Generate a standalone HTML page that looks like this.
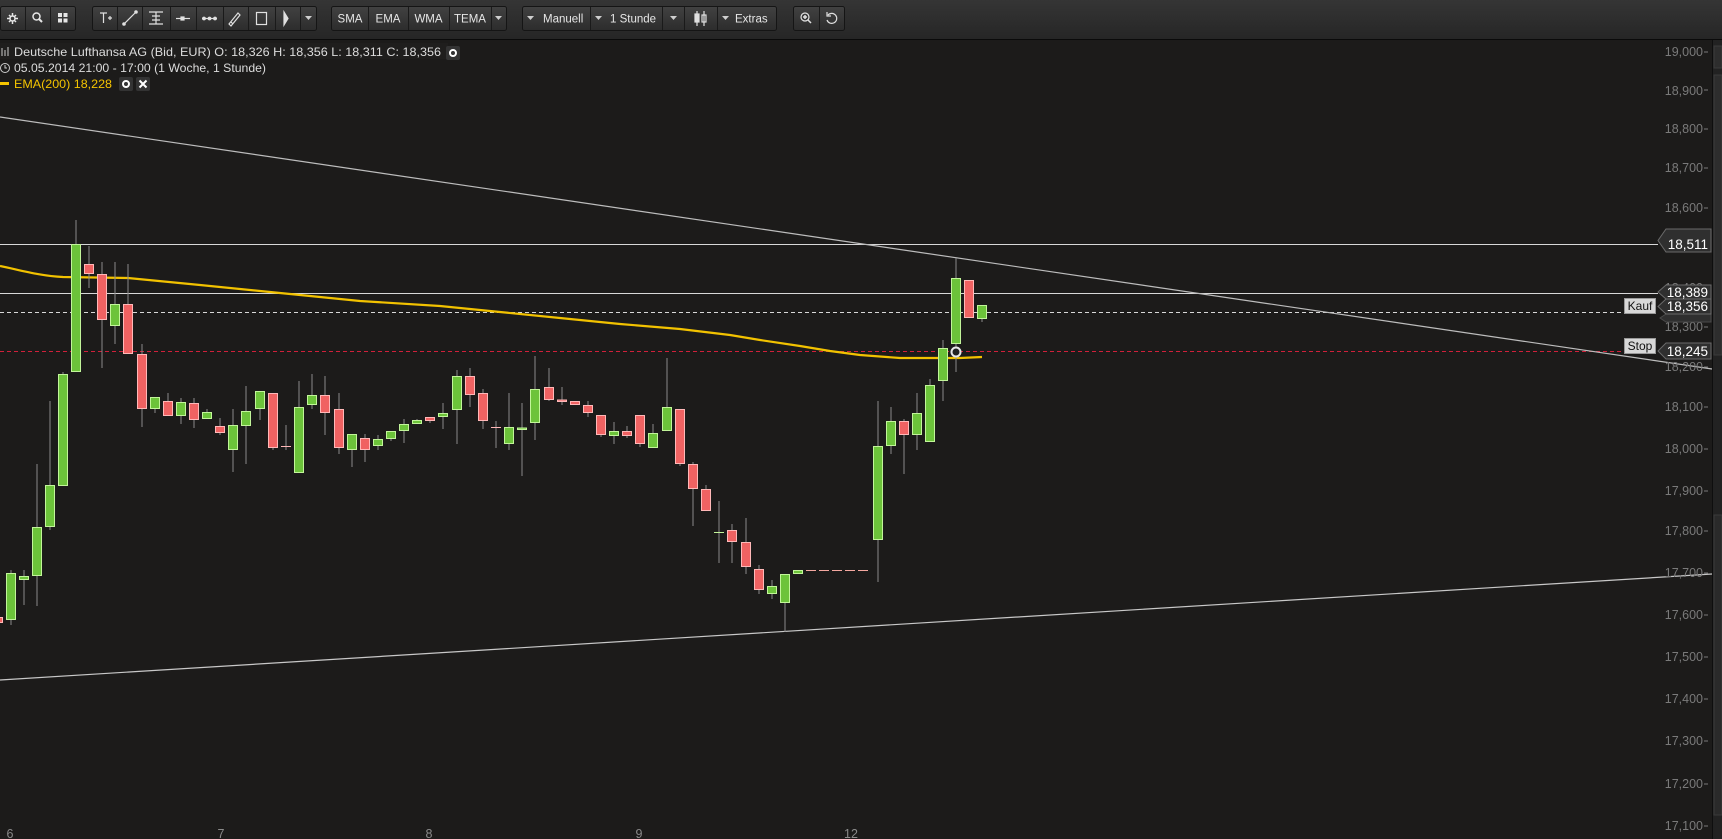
<!DOCTYPE html>
<html><head><meta charset="utf-8"><style>
html,body{margin:0;padding:0;background:#1c1b1a;width:1722px;height:839px;overflow:hidden;font-family:"Liberation Sans",Arial,sans-serif}
svg text{font-family:"Liberation Sans",Arial,sans-serif}
</style></head><body>
<svg width="1722" height="839" viewBox="0 0 1722 839" xmlns="http://www.w3.org/2000/svg">
<defs>
<linearGradient id="tb" x1="0" y1="0" x2="0" y2="1"><stop offset="0" stop-color="#353535"/><stop offset="1" stop-color="#262626"/></linearGradient>
<linearGradient id="bt" x1="0" y1="0" x2="0" y2="1"><stop offset="0" stop-color="#424242"/><stop offset="1" stop-color="#2c2c2c"/></linearGradient>
</defs>
<rect width="1722" height="839" fill="#1c1b1a"/>
<!-- toolbar -->
<rect width="1722" height="39" fill="url(#tb)"/>
<line x1="0" y1="39.5" x2="1722" y2="39.5" stroke="#0a0a0a"/>
<g stroke="#151515" fill="url(#bt)">
<rect x="0.5" y="6.5" width="75" height="24" rx="2"/>
<rect x="92.5" y="6.5" width="224" height="24" rx="2"/>
<rect x="331.5" y="6.5" width="175" height="24" rx="2"/>
<rect x="522.5" y="6.5" width="254" height="24" rx="2"/>
<rect x="793.5" y="6.5" width="51" height="24" rx="2"/>
</g>
<g stroke="#1a1a1a">
<line x1="25.5" y1="7" x2="25.5" y2="30"/><line x1="50.5" y1="7" x2="50.5" y2="30"/>
<line x1="117.5" y1="7" x2="117.5" y2="30"/><line x1="142.5" y1="7" x2="142.5" y2="30"/><line x1="170.5" y1="7" x2="170.5" y2="30"/><line x1="196.5" y1="7" x2="196.5" y2="30"/><line x1="223.5" y1="7" x2="223.5" y2="30"/><line x1="248.5" y1="7" x2="248.5" y2="30"/><line x1="275.5" y1="7" x2="275.5" y2="30"/><line x1="300.5" y1="7" x2="300.5" y2="30"/>
<line x1="368.5" y1="7" x2="368.5" y2="30"/><line x1="408.5" y1="7" x2="408.5" y2="30"/><line x1="449.5" y1="7" x2="449.5" y2="30"/><line x1="491.5" y1="7" x2="491.5" y2="30"/>
<line x1="590.5" y1="7" x2="590.5" y2="30"/><line x1="662.5" y1="7" x2="662.5" y2="30"/><line x1="684.5" y1="7" x2="684.5" y2="30"/><line x1="717.5" y1="7" x2="717.5" y2="30"/>
<line x1="819.5" y1="7" x2="819.5" y2="30"/>
</g>
<g fill="#e6e6e6" stroke="#e6e6e6" stroke-width="1.5">
<!-- gear -->
<circle cx="12.5" cy="18.5" r="2.5" fill="none"/><path d="M12.5 13v3M12.5 21v3M7 18.5h3M15 18.5h3M9 15l2 2M14 20l2 2M16 15l-2 2M9 22l2-2" fill="none"/>
<!-- search -->
<circle cx="36.5" cy="16.5" r="3.5" fill="none"/><path d="M39 19l3 3" fill="none" stroke-width="2"/>
<!-- grid -->
<rect x="58" y="13" width="4" height="4" stroke="none"/><rect x="63.5" y="13" width="4" height="4" stroke="none"/><rect x="58" y="18.5" width="4" height="4" stroke="none"/><rect x="63.5" y="18.5" width="4" height="4" stroke="none"/>
</g>
<g fill="none" stroke="#e0e0e0" stroke-width="1.2">
<path d="M100 13h7M103.5 13v10M108 18h4M110 16v4"/>
<path d="M124 24l12-12"/><circle cx="124" cy="24" r="1.2" fill="#e0e0e0"/><circle cx="136" cy="12" r="1.2" fill="#e0e0e0"/>
<path d="M149 12h14M149 24h14M156 12v12M152 16h8M152 20h8"/>
<path d="M176 18.5h14"/><rect x="181" y="17" width="3" height="3" fill="#e0e0e0"/>
<path d="M202 18.5h15"/><circle cx="204" cy="18.5" r="1.3" fill="#e0e0e0"/><circle cx="209.5" cy="18.5" r="1.3" fill="#e0e0e0"/><circle cx="215" cy="18.5" r="1.3" fill="#e0e0e0"/>
<path d="M229 24l9-11 2 2-9 11zM231 22l2 2"/>
<rect x="256.5" y="12.5" width="10" height="12"/>
<path d="M284 12l4 6.5-4 6.5z" fill="#e0e0e0"/>
</g>
<g fill="#cfcfcf">
<path d="M305 16h7l-3.5 4z"/><path d="M495 16h7l-3.5 4z"/><path d="M527 16h7l-3.5 4z"/><path d="M595 16h7l-3.5 4z"/><path d="M670 16h7l-3.5 4z"/><path d="M722 16h7l-3.5 4z"/>
</g>
<g fill="#e6e6e6" font-size="11.5">
<text x="350" y="22.5" text-anchor="middle">SMA</text>
<text x="388" y="22.5" text-anchor="middle">EMA</text>
<text x="428.5" y="22.5" text-anchor="middle">WMA</text>
<text x="470" y="22.5" text-anchor="middle">TEMA</text>
<text x="543" y="22.5">Manuell</text>
<text x="610" y="22.5">1 Stunde</text>
<text x="735" y="22.5">Extras</text>
</g>
<g stroke="#e0e0e0" fill="none" stroke-width="1.2">
<path d="M697 11v15M704 11v15"/><rect x="695" y="14" width="4" height="8" fill="#e0e0e0"/><rect x="702" y="15" width="4" height="7"/>
<circle cx="805" cy="17" r="4"/><path d="M808 20l3 3M803 17h4M805 15v4" stroke-width="1.5"/>
<path d="M828 15a5 5 0 1 1 -1 5M827 12v4h4"/>
</g>
<!-- info -->
<rect x="0" y="43" width="448" height="16" fill="#1f1e1d"/>
<g font-size="12" fill="#dcdcdc">
<path d="M2 48v8M5 50v6M8 47v9" stroke="#ccc" stroke-width="1"/>
<text x="14" y="56" textLength="427" lengthAdjust="spacingAndGlyphs">Deutsche Lufthansa AG (Bid, EUR)  O: 18,326  H: 18,356  L: 18,311  C: 18,356</text>
<rect x="446" y="46" width="14" height="14" rx="2" fill="#333"/><circle cx="453" cy="53" r="3" fill="none" stroke="#fff" stroke-width="2"/>
<circle cx="5" cy="68" r="4.5" fill="none" stroke="#ccc"/><path d="M5 65v3h2" fill="none" stroke="#ccc"/>
<text x="14" y="72" textLength="252" lengthAdjust="spacingAndGlyphs">05.05.2014 21:00 - 17:00 (1 Woche, 1 Stunde)</text>
</g>
<rect x="0" y="82" width="9" height="3" fill="#f5c400"/>
<text x="14" y="88" font-size="12" fill="#f5c400" textLength="98" lengthAdjust="spacingAndGlyphs">EMA(200)  18,228</text>
<rect x="119" y="77" width="14" height="14" rx="2" fill="#333"/><circle cx="126" cy="84" r="3" fill="none" stroke="#fff" stroke-width="2"/>
<rect x="136" y="77" width="14" height="14" rx="2" fill="#333"/><path d="M139.5 80.5l7 7M146.5 80.5l-7 7" stroke="#fff" stroke-width="2"/>

<!-- horizontal lines -->
<line x1="0" y1="244.5" x2="1658" y2="244.5" stroke="#d8d8d8"/>
<line x1="0" y1="293.5" x2="1658" y2="293.5" stroke="#d8d8d8"/>
<line x1="0" y1="312.5" x2="1624" y2="312.5" stroke="#d8d8d8" stroke-dasharray="4,3"/>
<line x1="0" y1="351.5" x2="1624" y2="351.5" stroke="#d0203a" stroke-dasharray="4,3"/>
<!-- trend lines -->
<line x1="0" y1="117" x2="1712" y2="369" stroke="#bdbdbd" stroke-width="1.2"/>
<line x1="0" y1="680" x2="1712" y2="574" stroke="#c8c8c8" stroke-width="1.2"/>
<!-- EMA -->
<path d="M0 266 C20 270 40 276 63 277 L128 278 L200 285 L280 293 L360 301 L440 306 L500 312 L560 318 L620 324 L680 329 L730 335 L760 340 L800 346 L830 351 L860 355 L900 358 L960 358 L982 357" fill="none" stroke="#f2c200" stroke-width="2.2"/>

<!-- candles -->
<g id="c" stroke-width="1">
<g stroke="#8a8a8a">
<path d="M-2 610v20M11 570v55M24 570v35M37 464v142M50 401v129M63 372v114M76 220v152M89 246v42M102 262v106M115 262v82M128 264v90M142 344v83M155 397v16M168 393v23M181 398v26M194 398v30M207 409v10M220 418v17M233 409v63M246 386v78M260 391v29M273 393v57M286 425v25M299 381v92M312 374v35M325 376v59M339 393v61M352 434v33M365 434v28M378 435v15M391 431v10M404 419v24M417 419v5M430 417v6M443 403v26M457 370v74M470 368v39M483 389v40M496 421v27M509 393v57M522 403v73M535 356v84M549 368v33M562 387v18M575 401v4M588 401v16M601 415v22M614 422v22M627 426v12M640 415v32M653 424v24M667 358v73M680 409v57M693 462v64M706 485v26M719 501v62M732 524v39M746 518v56M759 565v29M772 580v19M785 574v58M798 570v4M878 401v181M891 407v47M904 419v55M917 393v57M930 379v63M943 340v61M956 258v114M969 280v38M982 305v17"/>
</g>
<g fill="#6cc33a" stroke="#c2f59a">
<rect x="6.5" y="573.5" width="9" height="46"/><rect x="19.5" y="576.5" width="9" height="3"/><rect x="32.5" y="527.5" width="9" height="48"/><rect x="45.5" y="485.5" width="9" height="41"/><rect x="58.5" y="374.5" width="9" height="111"/><rect x="71.5" y="244.5" width="9" height="127"/><rect x="110.5" y="304.5" width="9" height="21"/><rect x="150.5" y="397.5" width="9" height="11"/><rect x="176.5" y="402.5" width="9" height="13"/><rect x="202.5" y="412.5" width="9" height="6"/><rect x="228.5" y="425.5" width="9" height="24"/><rect x="241.5" y="411.5" width="9" height="14"/><rect x="255.5" y="391.5" width="9" height="17"/><rect x="294.5" y="407.5" width="9" height="65"/><rect x="307.5" y="395.5" width="9" height="9"/><rect x="347.5" y="434.5" width="9" height="15"/><rect x="373.5" y="439.5" width="9" height="6"/><rect x="386.5" y="431.5" width="9" height="7"/><rect x="399.5" y="424.5" width="9" height="6"/><rect x="412.5" y="420.5" width="9" height="3"/><rect x="438.5" y="413.5" width="9" height="3"/><rect x="452.5" y="376.5" width="9" height="33"/><rect x="504.5" y="427.5" width="9" height="16"/><rect x="517.5" y="428" width="9" height="1.5"/><rect x="530.5" y="389.5" width="9" height="33"/><rect x="609.5" y="431.5" width="9" height="4"/><rect x="648.5" y="433.5" width="9" height="14"/><rect x="662.5" y="407.5" width="9" height="23"/><rect x="767.5" y="586.5" width="9" height="7"/><rect x="780.5" y="574.5" width="9" height="28"/><rect x="793.5" y="570.5" width="9" height="3"/><rect x="873.5" y="446.5" width="9" height="93"/><rect x="886.5" y="421.5" width="9" height="24"/><rect x="912.5" y="413.5" width="9" height="21"/><rect x="925.5" y="385.5" width="9" height="56"/><rect x="938.5" y="348.5" width="9" height="32"/><rect x="951.5" y="278.5" width="9" height="65"/><rect x="977.5" y="305.5" width="9" height="13"/>
</g>
<path d="M714 532.5h10" stroke="#c2f59a"/>
<g fill="#f06262" stroke="#ffb8b8">
<rect x="-6.5" y="617.5" width="9" height="5"/><rect x="84.5" y="264.5" width="9" height="9"/><rect x="97.5" y="274.5" width="9" height="45"/><rect x="123.5" y="304.5" width="9" height="49"/><rect x="137.5" y="354.5" width="9" height="54"/><rect x="163.5" y="401.5" width="9" height="14"/><rect x="189.5" y="403.5" width="9" height="16"/><rect x="215.5" y="426.5" width="9" height="6"/><rect x="268.5" y="393.5" width="9" height="54"/><rect x="320.5" y="395.5" width="9" height="17"/><rect x="334.5" y="409.5" width="9" height="38"/><rect x="360.5" y="438.5" width="9" height="11"/><rect x="425.5" y="417.5" width="9" height="3"/><rect x="465.5" y="376.5" width="9" height="18"/><rect x="478.5" y="393.5" width="9" height="27"/><rect x="544.5" y="387.5" width="9" height="12"/><rect x="557.5" y="400" width="9" height="1.5"/><rect x="570.5" y="401.5" width="9" height="3"/><rect x="583.5" y="405.5" width="9" height="7"/><rect x="596.5" y="415.5" width="9" height="19"/><rect x="622.5" y="431.5" width="9" height="4"/><rect x="635.5" y="415.5" width="9" height="28"/><rect x="675.5" y="409.5" width="9" height="54"/><rect x="688.5" y="464.5" width="9" height="24"/><rect x="701.5" y="489.5" width="9" height="21"/><rect x="727.5" y="530.5" width="9" height="11"/><rect x="741.5" y="542.5" width="9" height="24"/><rect x="754.5" y="569.5" width="9" height="20"/><rect x="899.5" y="421.5" width="9" height="13"/><rect x="964.5" y="280.5" width="9" height="37"/>
</g>
<path d="M281 446.5h10M491 427.5h10" stroke="#ffb8b8"/>
<path d="M806 570.5h64" stroke="#f4a8a0" stroke-dasharray="10,3"/>
</g>
<circle cx="956" cy="352" r="4.5" fill="#222" stroke="#e8e8e8" stroke-width="2"/>

<!-- axis -->
<rect x="1712" y="40" width="10" height="799" fill="#222"/>
<line x1="1712.5" y1="40" x2="1712.5" y2="839" stroke="#0e0e0e"/>
<rect x="1714" y="46" width="8" height="22" fill="#2d2d2d" stroke="#3a3a3a"/>
<rect x="1714" y="75" width="8" height="280" fill="#2d2d2d" stroke="#3a3a3a"/>
<rect x="1714" y="515" width="8" height="300" fill="#2a2a2a" stroke="#3a3a3a"/>
<g font-size="12.5" fill="#7a7a7a" text-anchor="end">
<text x="1703" y="56">19,000</text><text x="1703" y="95">18,900</text><text x="1703" y="133">18,800</text><text x="1703" y="172">18,700</text><text x="1703" y="212">18,600</text><text x="1703" y="292">18,400</text><text x="1703" y="331">18,300</text><text x="1703" y="371">18,200</text><text x="1703" y="411">18,100</text><text x="1703" y="453">18,000</text><text x="1703" y="495">17,900</text><text x="1703" y="535">17,800</text><text x="1703" y="577">17,700</text><text x="1703" y="619">17,600</text><text x="1703" y="661">17,500</text><text x="1703" y="703">17,400</text><text x="1703" y="745">17,300</text><text x="1703" y="788">17,200</text><text x="1703" y="830">17,100</text>
</g>
<g stroke="#7a7a7a"><path d="M1704 52h4M1704 90h4M1704 129h4M1704 168h4M1704 208h4M1704 327h4M1704 367h4M1704 407h4M1704 449h4M1704 491h4M1704 531h4M1704 573h4M1704 615h4M1704 657h4M1704 699h4M1704 741h4M1704 784h4M1704 826h4"/></g>
<!-- value labels -->
<g fill="#2f2f2f" stroke="#6a6a6a">
<path d="M1666 229h45v23h-45l-8-11.5z"/>
<path d="M1666 314h45v8h-45l-6-4z" stroke="#4a4a4a"/>
<path d="M1666 285h45v14h-45l-8-7z"/>
<path d="M1666 299h45v15h-45l-8-7.5z"/>
<path d="M1666 343h45v16h-45l-8-8z"/>
</g>
<g font-size="13.5" fill="#fff" text-anchor="end">
<text x="1708" y="249">18,511</text>
<text x="1708" y="297">18,389</text>
<text x="1708" y="311">18,356</text>
<text x="1708" y="356">18,245</text>
</g>
<rect x="1624.5" y="298.5" width="31" height="15" fill="#d8d8d8" stroke="#999"/>
<text x="1640" y="310" font-size="12" fill="#111" text-anchor="middle">Kauf</text>
<rect x="1624.5" y="338.5" width="31" height="15" fill="#d8d8d8" stroke="#999"/>
<text x="1640" y="350" font-size="12" fill="#111" text-anchor="middle">Stop</text>
<!-- x axis -->
<g font-size="12.5" fill="#8a8a8a" text-anchor="middle">
<text x="10" y="838">6</text><text x="221" y="838">7</text><text x="429" y="838">8</text><text x="639" y="838">9</text><text x="851" y="838">12</text>
</g>
</svg>
</body></html>
